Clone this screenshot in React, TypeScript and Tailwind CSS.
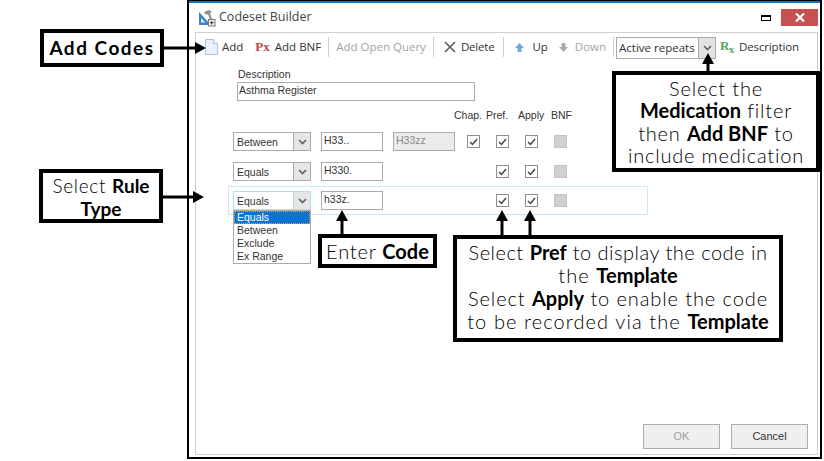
import { type ReactNode } from 'react';

const ui = 'font-["Open_Sans",sans-serif]';
const form = 'font-["Liberation_Sans",sans-serif]';
const note = 'font-["Lato",sans-serif]';

function Sep({ className }: { className?: string }) {
  return <div className={`w-px h-[20px] bg-[#cfcfcf] shrink-0 ml-[7px] ${className ?? 'mr-[7px]'}`} />;
}

function Tool({ icon, label, off, className, gap }: { icon?: ReactNode; label: string; off?: boolean; className?: string; gap?: string }) {
  return (
    <div className={`flex items-center ${gap ?? 'gap-[4px]'} text-[11.5px] whitespace-nowrap ${off ? 'text-[#a3a3a3]' : 'text-[#333]'} ${className ?? ''}`}>
      {icon}
      <span>{label}</span>
    </div>
  );
}

function Chevron() {
  return (
    <svg width="9" height="6" viewBox="0 0 9 6">
      <path d="M1 1l3.5 3.5L8 1" fill="none" stroke="#606060" strokeWidth="1.6" />
    </svg>
  );
}

function Combo({ value, hot }: { value: string; hot?: boolean }) {
  return (
    <div className={`flex w-[78px] h-[19px] border bg-white ${hot ? 'border-[#b5dcf5]' : 'border-[#ababab]'}`}>
      <div className="flex-1 pl-[3px] text-[10.5px] leading-[18px] text-[#333]">{value}</div>
      <div className={`w-[17px] bg-[#e6e6e6] border-l flex items-center justify-center ${hot ? 'border-[#b5dcf5]' : 'border-[#ababab]'}`}>
        <Chevron />
      </div>
    </div>
  );
}

function Field({ value, off, className }: { value: string; off?: boolean; className?: string }) {
  return (
    <div className={`w-[62px] h-[19px] border border-[#ababab] pl-[2px] text-[10.5px] leading-[15px] ${off ? 'bg-[#ebebeb] text-[#8a8a8a]' : 'bg-white text-[#333]'} ${className ?? ''}`}>
      {value}
    </div>
  );
}

function Check({ on = true }: { on?: boolean }) {
  if (!on) return <div className="w-[13px] h-[13px] bg-[#d0d0d0] border border-[#c4c4c4]" />;
  return (
    <div className="w-[13px] h-[13px] border border-[#8f8f8f] bg-white flex items-center justify-center">
      <svg width="9" height="8" viewBox="0 0 9 8"><path d="M1 4l2.5 2.5L8 1" fill="none" stroke="#444" strokeWidth="1.5" /></svg>
    </div>
  );
}

function Row({ combo, code, to, chap, hot }: { combo: string; code: string; to?: string; chap?: boolean; hot?: boolean }) {
  return (
    <div className="flex items-center h-[19px]">
      <Combo value={combo} hot={hot} />
      <Field value={code} className="ml-[10px]" />
      {to ? <Field value={to} off className="ml-[10px]" /> : <div className="w-[62px] ml-[10px]" />}
      <div className="w-[29px] ml-[4px] flex justify-center">{chap && <Check />}</div>
      <div className="w-[29px] flex justify-center"><Check /></div>
      <div className="w-[29px] flex justify-center"><Check /></div>
      <div className="w-[29px] flex justify-center"><Check on={false} /></div>
    </div>
  );
}

// annotation box, sits over the screenshot on its own canvas spot
function Note({ className, children }: { className: string; children: ReactNode }) {
  return (
    <div className={`absolute bg-white border-[4px] border-black text-black font-light text-center whitespace-nowrap flex flex-col items-center justify-center ${note} ${className}`}>
      {children}
    </div>
  );
}

function B({ children }: { children: ReactNode }) {
  return <b className="font-bold tracking-[0px]">{children}</b>;
}

function ArrowH({ x, y, w }: { x: number; y: number; w: number }) {
  return (
    <svg className="absolute" style={{ left: x, top: y }} width={w} height="14" viewBox={`0 0 ${w} 14`}>
      <path d={`M0 7H${w - 10}`} stroke="#000" strokeWidth="3" />
      <path d={`M${w - 11} 1L${w} 7L${w - 11} 13Z`} fill="#000" />
    </svg>
  );
}

function ArrowUp({ x, y, h }: { x: number; y: number; h: number }) {
  return (
    <svg className="absolute" style={{ left: x, top: y }} width="14" height={h} viewBox={`0 0 14 ${h}`}>
      <path d={`M7 ${h}V10`} stroke="#000" strokeWidth="3" />
      <path d="M7 0L13 11H1Z" fill="#000" />
    </svg>
  );
}

export default function App() {
  return (
    <div className="relative w-[824px] h-[461px] bg-white overflow-hidden">
      <div className={`absolute left-[187px] top-0 w-[635px] h-[459px] border-2 border-t border-black bg-[#0a78c8] pt-[2px] ${ui}`}>
        <div className="h-full bg-white flex flex-col">
          <div className="flex items-center h-[29px] pl-[9px] pr-[2px] shrink-0">
            <svg width="18" height="18" viewBox="0 0 18 18">
              <path d="M1 3v13h12z" fill="#3f7fc4" />
              <path d="M3 9v4.5h4.5z" fill="#dcebf8" />
              <path d="M6 3l5-2 3 2-2 1 2 6-2 .6-2-5.6-2 1z" fill="#8f8f8f" />
              <rect x="10.5" y="10.5" width="6.5" height="6.5" fill="#eef2f6" stroke="#777" />
              <path d="M13.75 12v3.5M12 13.75h3.5" stroke="#333" />
            </svg>
            <span className="ml-[3px] text-[12.5px] text-[#444]">Codeset Builder</span>
            <div className="ml-auto w-[10px] h-[6px] mr-[10px] border border-t-2 border-black" />
            <div className="w-[37px] h-[17px] bg-[#c75050] flex items-center justify-center">
              <svg width="10" height="9" viewBox="0 0 10 9"><path d="M1 .5l8 8M9 .5l-8 8" stroke="#fff" strokeWidth="2.2" /></svg>
            </div>
          </div>
          <div className="flex-1 flex flex-col border border-[#d0d0d0] ml-[6px] mr-[2px] mb-[2px] relative">
            <div className="flex items-center h-[28px] pl-[9px] shrink-0">
              <Tool label="Add" className="mr-[12px]" icon={
                <svg width="13" height="16" viewBox="0 0 13 16">
                  <path d="M.5.5h8l4 4v11H.5z" fill="#eaf2fb" stroke="#a9c3e0" />
                  <path d="M8.5.5v4h4" fill="#fff" stroke="#a9c3e0" />
                </svg>
              } />
              <Tool label="Add BNF" gap="gap-[5px]" icon={<span className="font-['Liberation_Serif',serif] font-bold text-[13px] text-[#b24a4a]">Px</span>} />
              <Sep />
              <Tool label="Add Open Query" off />
              <Sep />
              <Tool label="Delete" gap="gap-[4px]" className="ml-[2px] mr-[2px] tracking-[-0.2px]" icon={
                <svg width="14" height="14" viewBox="0 0 14 14"><path d="M2 2l10 10M12 2L2 12" stroke="#555" strokeWidth="1.5" /></svg>
              } />
              <Sep />
              <Tool label="Up" gap="gap-[7px]" className="ml-[3px] mr-[10px]" icon={
                <svg width="11" height="11" viewBox="0 0 11 11"><path d="M5.5 1L10 6H7.5v4h-4V6H1z" fill="#6ea7dc" /></svg>
              } />
              <Tool label="Down" gap="gap-[6px]" off icon={
                <svg width="11" height="11" viewBox="0 0 11 11"><path d="M5.5 10L10 5H7.5V1h-4v4H1z" fill="#ababab" /></svg>
              } />
              <Sep className="mr-[2px]" />
              <div className="flex w-[100px] h-[22px] mt-[2px] border border-[#ababab] text-[11.5px] text-[#333] shrink-0">
                <div className="flex-1 pl-[2px] leading-[20px] whitespace-nowrap">Active repeats</div>
                <div className="w-[17px] bg-[#e2e2e2] border-l border-[#ababab] flex items-center justify-center">
                  <Chevron />
                </div>
              </div>
              <Tool label="Description" gap="gap-[4px]" className="ml-[4px] tracking-[-0.15px]" icon={
                <span className="relative block w-[15px] h-[16px] font-['Liberation_Serif',serif] font-bold text-[13px] leading-[14px] text-[#4fa65b]">
                  R
                  <span className="absolute left-[9px] top-[6px] text-[10px] leading-[10px]">x</span>
                </span>
              } />
            </div>

            <div className={`pl-[41px] pt-[6px] text-[10.5px] text-[#333] ${form}`}>
              <div className="leading-[14px] pl-[1px]">Description</div>
              <div className="w-[238px] h-[19px] border border-[#ababab] pl-[1px] leading-[15px] mt-[1px]">Asthma Register</div>
            </div>

            <div className={`flex pl-[258px] mt-[5px] h-[18px] text-[10.5px] text-[#333] leading-[18px] ${form}`}>
              <span className="w-[32px]">Chap.</span>
              <span className="w-[32px]">Pref.</span>
              <span className="w-[33px]">Apply</span>
              <span>BNF</span>
            </div>

            <div className={`pl-[37px] mt-[8px] flex flex-col ${form}`}>
              <Row combo="Between" code="H33.." to="H33zz" chap />
              <div className="mt-[11px]"><Row combo="Equals" code="H330." /></div>
              <div className="relative mt-[10px]">
                <div className="absolute left-[-5px] top-[-5px] w-[420px] h-[29px] border border-[#cfe6f7]" />
                <div className="relative"><Row combo="Equals" code="h33z." hot /></div>
                <div className="absolute left-0 top-[19px] w-[78px] border border-[#ababab] bg-white text-[10.5px] leading-[13px] text-[#333]">
                  <div className="bg-[#0a74d6] text-white pl-[3px] outline-dotted outline-1 -outline-offset-1 outline-[#e8a33d]">Equals</div>
                  <div className="pl-[3px]">Between</div>
                  <div className="pl-[3px]">Exclude</div>
                  <div className="pl-[3px]">Ex Range</div>
                </div>
              </div>
            </div>

            <div className={`mt-auto mb-[5px] mr-[9px] flex justify-end gap-[11px] text-[11px] ${form}`}>
              <div className="w-[77px] h-[25px] border border-[#adadad] bg-[#efefef] text-[#a0a0a0] flex items-center justify-center">OK</div>
              <div className="w-[77px] h-[25px] border border-[#adadad] bg-[#efefef] text-[#333] flex items-center justify-center">Cancel</div>
            </div>
          </div>
        </div>
      </div>

      <Note className="left-[40px] top-[29px] w-[124px] h-[38px] text-[19px] tracking-[1.5px]">
        <b className="font-bold">Add Codes</b>
      </Note>
      <ArrowH x={163} y={41} w={43} />

      <Note className="left-[39px] top-[169px] w-[124px] h-[54px] pt-[1px] text-[19px] leading-[23px] tracking-[0.7px]">
        <div>Select <B>Rule</B></div>
        <div><B>Type</B></div>
      </Note>
      <ArrowH x={162} y={190} w={42} />

      <Note className="left-[612px] top-[71px] w-[208px] h-[101px] text-[20px] leading-[22.5px] tracking-[0.8px]">
        <div>Select the</div>
        <div><B>Medication</B> filter</div>
        <div>then <B>Add BNF</B> to</div>
        <div>include medication</div>
      </Note>
      <ArrowUp x={701} y={53} h={20} />

      <Note className="left-[318px] top-[234px] w-[119px] h-[34px] text-[20px] tracking-[0.8px]">
        <div>Enter <B>Code</B></div>
      </Note>
      <ArrowUp x={335} y={210} h={25} />

      <Note className="left-[453px] top-[235px] w-[330px] h-[107px] pb-[3px] text-[20px] leading-[23px]">
        <div className="tracking-[0.5px]">Select <B>Pref</B> to display the code in</div>
        <div className="tracking-[1.1px]">the <B>Template</B></div>
        <div className="tracking-[0.9px]">Select <B>Apply</B> to enable the code</div>
        <div className="tracking-[1.1px]">to be recorded via the <B>Template</B></div>
      </Note>
      <ArrowUp x={495} y={210} h={26} />
      <ArrowUp x={523} y={210} h={26} />
    </div>
  );
}
